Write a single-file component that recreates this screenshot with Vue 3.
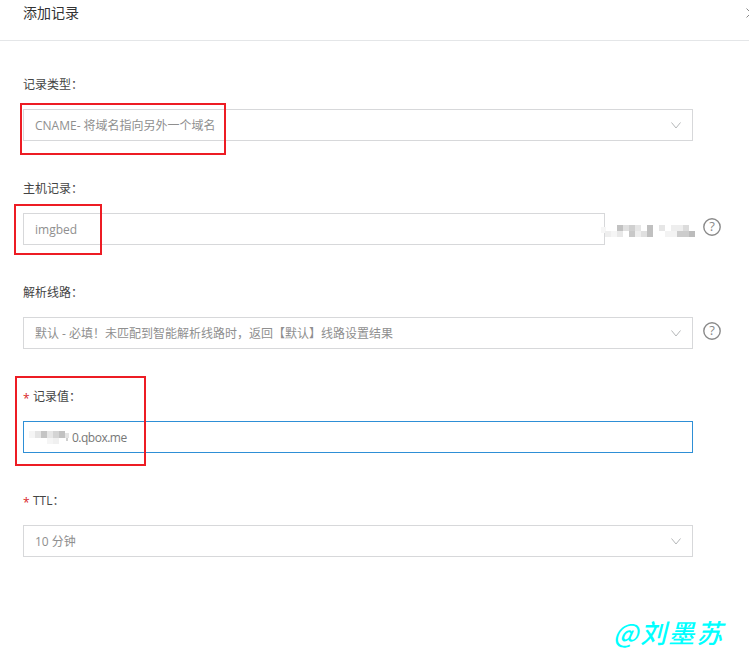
<template>
  <div class="dialog">
    <header class="head">
      <span class="title">添加记录</span>
      <svg class="close" width="10" height="10" viewBox="0 0 10 10"><path d="M0.5 0.5L9.5 9.5M9.5 0.5L0.5 9.5" /></svg>
    </header>

    <form class="form" @submit.prevent>
      <div class="field">
        <label class="label">记录类型：</label>
        <div class="row">
          <div class="control select">
            <span>CNAME- 将域名指向另外一个域名</span>
            <svg class="arrow" width="10" height="7" viewBox="0 0 10 7"><path d="M0.5 0.5L5 6L9.5 0.5" /></svg>
          </div>
        </div>
        <i class="mark mark-type"></i>
      </div>

      <div class="field">
        <label class="label">主机记录：</label>
        <div class="row">
          <div class="control host"><span>imgbed</span></div>
          <svg class="mosaic" width="94" height="12" viewBox="0 0 94 12">
            <rect v-for="(c, i) in domainCells" :key="i" :x="c[0]" :y="c[1]" width="6" height="6" :fill="c[2]" />
          </svg>
          <svg class="help" width="18" height="18" viewBox="0 0 18 18">
            <circle cx="9" cy="9" r="8.2" />
            <text x="9" y="13" text-anchor="middle">?</text>
          </svg>
        </div>
        <i class="mark mark-host"></i>
      </div>

      <div class="field">
        <label class="label">解析线路：</label>
        <div class="row">
          <div class="control select">
            <span>默认 - 必填！未匹配到智能解析线路时，返回【默认】线路设置结果</span>
            <svg class="arrow" width="10" height="7" viewBox="0 0 10 7"><path d="M0.5 0.5L5 6L9.5 0.5" /></svg>
          </div>
          <svg class="help line-help" width="18" height="18" viewBox="0 0 18 18">
            <circle cx="9" cy="9" r="8.2" />
            <text x="9" y="13" text-anchor="middle">?</text>
          </svg>
        </div>
      </div>

      <div class="field">
        <label class="label"><em>*</em>记录值：</label>
        <div class="row">
          <div class="control focus">
            <svg class="mosaic-inline" width="42" height="13" viewBox="0 0 42 13">
              <rect v-for="(c, i) in valueCells" :key="i" :x="c[0]" :y="c[1]" :width="c[2]" :height="c[3]" :fill="c[4]" />
            </svg>
            <span class="value">0.qbox.me</span>
          </div>
        </div>
        <i class="mark mark-value"></i>
      </div>

      <div class="field">
        <label class="label"><em>*</em>TTL：</label>
        <div class="row">
          <div class="control select">
            <span>10 分钟</span>
            <svg class="arrow" width="10" height="7" viewBox="0 0 10 7"><path d="M0.5 0.5L5 6L9.5 0.5" /></svg>
          </div>
        </div>
      </div>
    </form>

    <div class="watermark">@刘墨苏</div>
  </div>
</template>

<script setup>
// blurred-out pixels of the domain: x, y, colour
const domainCells = [
  [-1, 2, '#f6f6f6'],
  [16, 0, '#c2c2c2'], [22, 0, '#e0e0e0'], [28, 0, '#d0d0d0'], [34, 0, '#e6e6e6'],
  [46, 0, '#c0c0c0'], [58, 0, '#e6e6e6'], [70, 0, '#eeeeee'], [76, 0, '#eeeeee'],
  [82, 0, '#dcdcdc'],
  [4, 6, '#eeeeee'], [10, 6, '#f5f5f5'], [16, 6, '#e8e8e8'], [28, 6, '#c8c8c8'],
  [34, 6, '#eeeeee'], [40, 6, '#e0e0e0'], [46, 6, '#c0c0c0'], [64, 6, '#f3f3f3'],
  [70, 6, '#f3f3f3'], [76, 6, '#cccccc'], [82, 6, '#cccccc'], [88, 6, '#bcbcbc'],
]
// same for the record value: x, y, w, h, colour
const valueCells = [
  [0, 0, 6, 7, '#f5f5f5'], [6, 0, 6, 7, '#e4e4e4'], [12, 0, 6, 7, '#c4c4c4'],
  [18, 0, 6, 7, '#e6e6e6'], [18, 7, 6, 6, '#f5f5f5'], [24, 0, 6, 7, '#d4d4d4'],
  [24, 7, 6, 6, '#f0f0f0'], [30, 0, 6, 7, '#c2c2c2'], [36, 2, 4, 5, '#e4e4e4'],
  [37, 7, 2, 3, '#d0d0d0'],
]
</script>

<style scoped>
.dialog {
  width: 749px;
  height: 660px;
  position: relative;
  overflow: hidden;
  background: #fff;
  color: #333;
  font-family: "Open Sans", "Noto Sans CJK SC", sans-serif;
  font-size: 12px;
}
.head {
  height: 40px;
  padding-left: 23px;
  box-sizing: border-box;
  display: flex;
  align-items: center;
  justify-content: space-between;
  border-bottom: 1px solid #e4e6e8;
  height: 41px;
}
.title {
  font-size: 14px;
  line-height: 26px;
  margin-bottom: 14px;
}
.close {
  margin-right: -7px;
  margin-bottom: 14px;
  flex: none;
}
.close path {
  fill: none;
  stroke: #888;
}
.form {
  padding: 34px 0 0 23px;
}
.field {
  height: 104px;
  position: relative;
}
.label {
  display: block;
  height: 20px;
  line-height: 20px;
  margin-bottom: 14px;
  color: #444;
}
.label em {
  display: inline-block;
  width: 10px;
  color: #d9231f;
  font-style: normal;
  vertical-align: -2px;
}
.row {
  display: flex;
  align-items: flex-start;
}
.control {
  box-sizing: border-box;
  width: 670px;
  height: 32px;
  padding: 0 11px;
  display: flex;
  align-items: center;
  justify-content: space-between;
  border: 1px solid #d7d8da;
  color: #8f8f8f;
  flex: none;
}
.host {
  width: 582px;
}
.focus {
  justify-content: flex-start;
  border-color: #2e8fd6;
  color: #777;
}
.value {
  letter-spacing: -0.5px;
}
.arrow {
  flex: none;
}
.arrow path {
  fill: none;
  stroke: #b5b7b9;
}
.mosaic {
  margin: 12px 0 0 -4px;
  flex: none;
}
.mosaic-inline {
  margin-left: -6px;
  margin-right: 1px;
  flex: none;
}
.help {
  margin: 5px 0 0 8px;
  flex: none;
}
.line-help {
  margin-left: 10px;
}
.help circle {
  fill: none;
  stroke: #8a8a8a;
  stroke-width: 1.4;
}
.help text {
  font-size: 13px;
  fill: #8a8a8a;
}
.mark {
  position: absolute;
  box-sizing: border-box;
  border: 2px solid #ed1c24;
  pointer-events: none;
}
.mark-type {
  left: -3px;
  top: 28px;
  width: 206px;
  height: 52px;
}
.mark-host {
  left: -9px;
  top: 25px;
  width: 88px;
  height: 51px;
}
.mark-value {
  left: -8px;
  top: -11px;
  width: 131px;
  height: 90px;
}
.watermark {
  position: absolute;
  left: 613px;
  top: 612px;
  font-family: "Noto Sans CJK SC", sans-serif;
  font-size: 26px;
  line-height: 40px;
  font-style: italic;
  font-weight: 500;
  letter-spacing: 2px;
  color: #0ff;
  white-space: nowrap;
}
</style>

<style>
html, body {
  margin: 0;
  background: #fff;
}
</style>
